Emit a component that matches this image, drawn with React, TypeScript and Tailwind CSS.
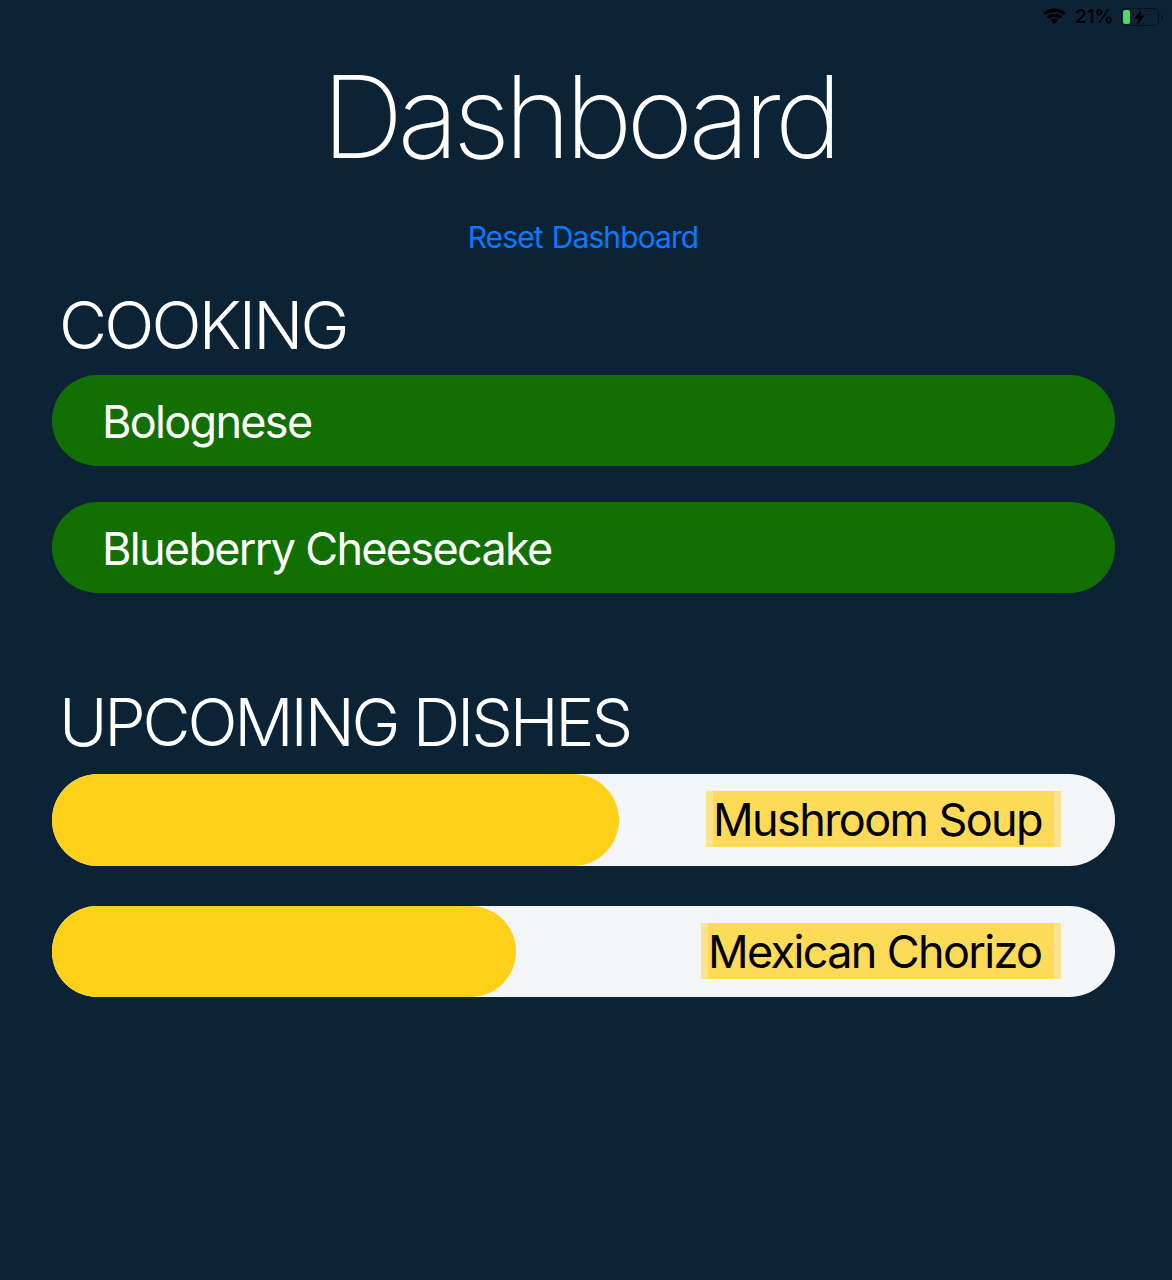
const cooking = [
  { name: "Bolognese", pill: "" },
  { name: "Blueberry Cheesecake", pill: "mt-[36px]" },
];
const upcoming = [
  { name: "Mushroom Soup", bar: "w-[567px]", tag: "w-[355px] tracking-[-1.6px]", pill: "h-[92px]" },
  { name: "Mexican Chorizo", bar: "w-[464px]", tag: "w-[360px] tracking-[-1.65px]", pill: "mt-[40px] h-[91px]" },
];

function StatusBar() {
  return (
    <div className="flex h-[33px] items-center justify-end pr-[7px] text-black">
      <svg width="23" height="17" viewBox="0 0 21 17" preserveAspectRatio="none" fill="currentColor">
        <path d="M10.500 .5C6.500 .5 2.800 2.100 0 4.800l2.200 2.400C4.500 5 7.300 3.900 10.500 3.900s6 1.100 8.300 3.300L21 4.800C18.200 2.100 14.500.5 10.500.5Z" />
        <path d="M10.500 5.500c-2.800 0-5.300 1.100-7.200 2.900l2.300 2.400C6.900 9.600 8.600 8.900 10.500 8.900s3.600.7 4.900 1.900l2.300-2.400C15.800 6.600 13.300 5.500 10.500 5.500Z" />
        <path d="M10.500 10.700c-1.400 0-2.700.5-3.700 1.400l3.700 4 3.700-4C13.200 11.200 11.900 10.700 10.500 10.700Z" />
      </svg>
      <span className="ml-[9px] w-[39px] text-[19px] font-medium leading-none">21%</span>
      <svg className="ml-[6px]" width="45" height="20" viewBox="0 0 45 20">
        <rect x="1.500" y="1.500" width="37" height="17" rx="4.500" fill="none" stroke="black" strokeOpacity=".45" />
        <rect x="3" y="3" width="7" height="14" rx="2" fill="#4cd964" />
        <path d="m21.500 2.500-7.500 9h4.500l-1.500 6.500 8-9.500h-4.500Z" fill="black" />
        <path d="M41 7.500c2.500.8 2.500 4.200 0 5Z" fill="black" fillOpacity=".45" />
      </svg>
    </div>
  );
}

export default function App() {
  return (
    <main className="h-[1280px] w-[1172px] overflow-hidden bg-[#0c2335] font-['Inter',sans-serif] text-white">
      <StatusBar />
      <h1 className="mt-[26px] flex h-[116px] items-center justify-center whitespace-nowrap pr-[14px] text-[114px] font-extralight leading-none tracking-[-6px]">
        Dashboard
      </h1>
      <button className="mx-auto mt-[40px] block h-[42px] whitespace-nowrap pr-[6px] text-[30px] tracking-[-0.9px] [word-spacing:1.5px] text-[#0a7aff]">
        Reset Dashboard
      </button>
      <section className="ml-[52px] mt-[28px] w-[1063px]">
        <h2 className="ml-[7px] h-[90px] whitespace-nowrap text-[66px] font-light leading-[80px] tracking-[-2.8px]">COOKING</h2>
        {cooking.map((d) => (
          <div
            key={d.name}
            className={`flex h-[91px] items-center rounded-full bg-[#127003] pl-[50px] pt-[2px] text-[45px] tracking-[-1.7px] ${d.pill}`}
          >
            {d.name}
          </div>
        ))}
      </section>
      <section className="ml-[52px] mt-[89px] w-[1063px]">
        <h2 className="ml-[7px] h-[92px] whitespace-nowrap text-[66px] font-light leading-[80px] tracking-[-3.2px]">
          UPCOMING DISHES
        </h2>
        {upcoming.map((d) => (
          <div key={d.name} className={`flex justify-between rounded-full bg-[#f4f5f7] ${d.pill}`}>
            <div className={`h-full rounded-full bg-[#fdd01a] ${d.bar}`} />
            <div
              className={`mr-[54px] mt-[17px] h-[56px] whitespace-nowrap border-x-[7px] border-[#f9e38d] bg-[#fddb58] text-[45px] leading-[58px] text-black ${d.tag}`}
            >
              {d.name}
            </div>
          </div>
        ))}
      </section>
    </main>
  );
}
